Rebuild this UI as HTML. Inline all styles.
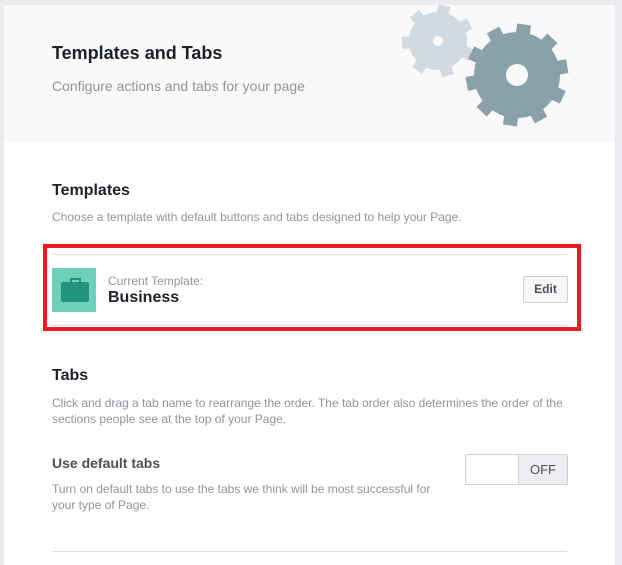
<!DOCTYPE html>
<html><head><style>
body{margin:0;width:622px;height:554px;background:#e9ebee;font-family:"Liberation Sans",Arial,sans-serif;overflow:hidden;position:relative}
.card{position:absolute;left:4px;top:5px;width:611px;height:560px;background:#fff}
.hdr{position:absolute;left:0;top:0;width:611px;height:137px;background:#f9f9f9}
.t{position:absolute;white-space:nowrap}
</style></head><body>
<div class="card">
<div class="hdr"></div>
<svg style="position:absolute;left:0;top:0" width="611" height="137">
<g transform="translate(434,36) rotate(10)" fill="#d0dae0">
<circle r="29"/>
<g id="s"><rect x="-6" y="-36" width="12" height="10"/></g>
<use href="#s" transform="rotate(51)"/><use href="#s" transform="rotate(103)"/><use href="#s" transform="rotate(154)"/><use href="#s" transform="rotate(206)"/><use href="#s" transform="rotate(257)"/><use href="#s" transform="rotate(309)"/>
<circle r="5" fill="#f9f9f9"/>
</g>
<g transform="translate(513,70) rotate(8)" fill="#8aa1ac">
<circle r="43"/>
<g id="b"><rect x="-7" y="-51" width="14" height="12"/></g>
<use href="#b" transform="rotate(36)"/><use href="#b" transform="rotate(72)"/><use href="#b" transform="rotate(108)"/><use href="#b" transform="rotate(144)"/><use href="#b" transform="rotate(180)"/><use href="#b" transform="rotate(216)"/><use href="#b" transform="rotate(252)"/><use href="#b" transform="rotate(288)"/><use href="#b" transform="rotate(324)"/>
<circle r="11" fill="#f9f9f9"/>
</g>
</svg>
<div class="t" style="left:48px;top:38px;font-size:18px;font-weight:bold;color:#1d2129">Templates and Tabs</div>
<div class="t" style="left:48px;top:73px;font-size:14px;color:#90949c">Configure actions and tabs for your page</div>
<div class="t" style="left:48px;top:177px;font-size:16px;font-weight:bold;color:#1d2129">Templates</div>
<div class="t" style="left:48px;top:205px;font-size:12px;color:#90949c">Choose a template with default buttons and tabs designed to help your Page.</div>
<div style="position:absolute;left:39px;top:239px;width:538px;height:87px;border:4px solid #ed1c24;box-sizing:border-box"></div>
<div style="position:absolute;left:48px;top:249px;width:515px;height:1px;background:#dddfe2"></div>
<div style="position:absolute;left:48px;top:320px;width:515px;height:1px;background:#dddfe2"></div>
<div style="position:absolute;left:48px;top:263px;width:44px;height:44px;background:#6dcfb9"></div>
<div style="position:absolute;left:57px;top:277px;width:28px;height:20px;background:#22947b;border-radius:2px"></div>
<div style="position:absolute;left:66px;top:273px;width:7px;height:3px;border:2px solid #22947b;border-bottom:0"></div>
<div class="t" style="left:104px;top:269px;font-size:12px;color:#90949c">Current Template:</div>
<div class="t" style="left:104px;top:284px;font-size:16px;font-weight:bold;color:#1d2129">Business</div>
<div style="position:absolute;left:519px;top:271px;width:45px;height:27px;box-sizing:border-box;border:1px solid #ced0d4;background:#f6f7f9;border-radius:2px;font-size:12px;font-weight:bold;color:#4b4f56;text-align:center;line-height:25px">Edit</div>
<div class="t" style="left:48px;top:362px;font-size:16px;font-weight:bold;color:#1d2129">Tabs</div>
<div class="t" style="left:48px;top:390px;font-size:12px;color:#90949c;line-height:16px">Click and drag a tab name to rearrange the order. The tab order also determines the order of the<br>sections people see at the top of your Page.</div>
<div class="t" style="left:48px;top:450px;font-size:14px;font-weight:bold;color:#4b4f56">Use default tabs</div>
<div class="t" style="left:48px;top:476px;font-size:12px;color:#90949c;line-height:16px">Turn on default tabs to use the tabs we think will be most successful for<br>your type of Page.</div>
<div style="position:absolute;left:461px;top:449px;width:103px;height:31px;box-sizing:border-box;border:1px solid #ced0d4;border-radius:2px;background:#fff"></div>
<div style="position:absolute;left:514px;top:450px;width:48px;height:29px;background:#ebedf0;border-left:1px solid #ced0d4;font-size:13px;color:#4b4f56;text-align:center;line-height:29px">OFF</div>
<div style="position:absolute;left:48px;top:546px;width:515px;height:1px;background:#dddfe2"></div>
</div>
</body></html>
